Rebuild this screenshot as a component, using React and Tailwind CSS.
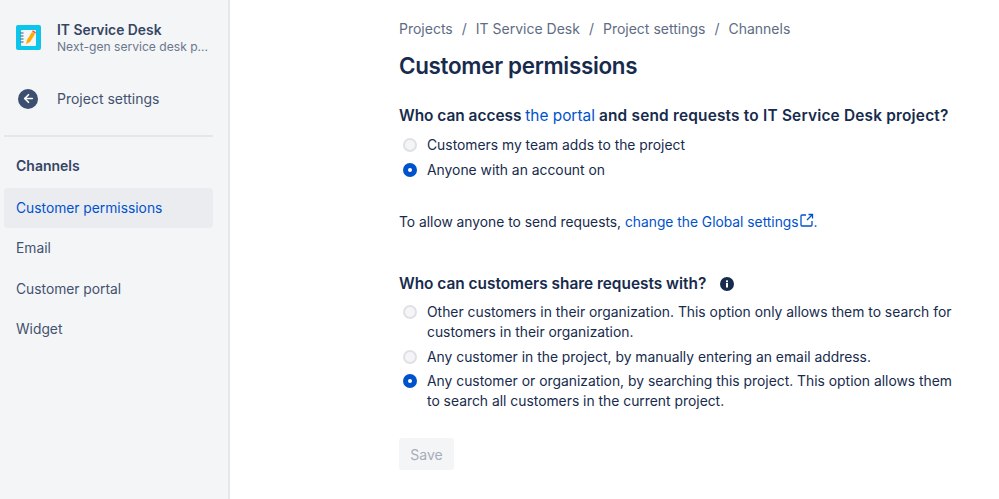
import { ArrowLeft } from "lucide-react";

const navItem = "flex h-10 items-center rounded-[4px] pl-3 text-[13.8px]";

const ProjectLogo = () => (
  <svg width="25" height="25" viewBox="0 0 25 25" className="shrink-0">
    <rect width="25" height="25" rx="2" fill="#0dc5ea" />
    <rect x="5" y="5" width="15" height="16" rx="1" fill="#f4f5f7" />
    <path d="M4.5 8h3M4.5 11h3M4.5 14h3M4.5 17h3" stroke="#42526e" strokeWidth="1" />
    <path d="M10 19l1-4 5-8 3 2-5 8z" fill="#ffab00" />
    <path d="M16 6.5l1-1.2 3 2-.8 1.4z" fill="#ff5630" />
  </svg>
);

const Radio = ({ checked }) =>
  checked ? (
    <span className="flex h-[14px] w-[14px] shrink-0 items-center justify-center rounded-full bg-[#0052cc]">
      <span className="h-1 w-1 rounded-full bg-white" />
    </span>
  ) : (
    <span className="h-[14px] w-[14px] shrink-0 rounded-full border-2 border-[#dfe1e6] bg-[#f4f5f7]" />
  );

const Option = ({ checked, children }) => (
  <div className="flex items-start gap-[10px] pl-[4px] text-[13.87px] leading-[20px] text-[#172b4d]">
    <span className="flex h-5 items-center">
      <Radio checked={checked} />
    </span>
    <span>{children}</span>
  </div>
);

const App = () => {
  return (
    <div className="flex h-[499px] w-[999px] overflow-hidden bg-white font-['Inter',sans-serif] antialiased">
      <aside className="h-full w-[230px] shrink-0 border-r-2 border-[#e4e6ea] bg-[#f4f5f7]">
        <div className="flex h-[74px] items-center gap-4 pl-4">
          <ProjectLogo />
          <div>
            <div className="text-[13.85px] leading-[18px] font-semibold text-[#344563]">IT Service Desk</div>
            <div className="text-[12.1px] leading-[15px] text-[#6b778c]">Next-gen service desk p...</div>
          </div>
        </div>
        <div className="flex h-[49px] items-center gap-[19px] pl-[18px]">
          <span className="flex h-5 w-5 items-center justify-center rounded-full bg-[#3d4f70] text-white">
            <ArrowLeft size={13} strokeWidth={3} />
          </span>
          <span className="text-[14px] text-[#42526e]">Project settings</span>
        </div>
        <div className="mx-1 mt-[12px] h-[2px] w-[209px] bg-[#e4e6ea]" />
        <div className="flex h-[51px] items-center pl-4 pt-[5px] text-[14px] font-semibold text-[#344563]">Channels</div>
        <nav className="ml-1 flex w-[209px] flex-col gap-[0.5px] text-[#42526e]">
          <div className={`${navItem} bg-[#ebecf0] text-[#0052cc]`}>Customer permissions</div>
          <div className={navItem}>Email</div>
          <div className={navItem}>Customer portal</div>
          <div className={navItem}>Widget</div>
        </nav>
      </aside>

      <main className="ml-[169px] w-[560px] pt-[20px]">
        <div className="flex gap-[9px] text-[14px] leading-[18px] text-[#5e6c84]">
          <span>Projects</span>
          <span>/</span>
          <span>IT Service Desk</span>
          <span>/</span>
          <span>Project settings</span>
          <span>/</span>
          <span>Channels</span>
        </div>
        <h1 className="mt-[13px] text-[22.4px] leading-[30px] font-semibold tracking-[-0.3px] text-[#172b4d]">Customer permissions</h1>

        <h2 className="mt-[24px] text-[15.4px] leading-[22px] font-semibold text-[#172b4d]">
          Who can access <span className="font-normal text-[#0052cc]">the portal</span>
          <span className="tracking-[0.2px]"> and send requests to IT Service Desk project?</span>
        </h2>
        <div className="mt-[8px] flex flex-col gap-[4.5px]">
          <Option>Customers my team adds to the project</Option>
          <Option checked>Anyone with an account on</Option>
        </div>

        <p className="mt-[32.5px] flex items-center text-[13.8px] leading-[20px] text-[#172b4d]">
          To allow anyone to send requests,&nbsp;
          <span className="text-[#0052cc]">change the Global settings</span>
          <svg width="14" height="14" viewBox="0 0 14 14" fill="none" stroke="#0052cc" strokeWidth="1.3" className="-mt-1 ml-[1px]">
            <path d="M6 2H2a1 1 0 0 0-1 1v9a1 1 0 0 0 1 1h9a1 1 0 0 0 1-1V8" />
            <path d="M8.5 1.5h4v4M12.5 1.5L7 7" />
          </svg>
          <span className="text-[#0052cc]">.</span>
        </p>

        <h2 className="mt-[41px] flex items-center gap-[14px] text-[15.4px] leading-[22px] font-semibold text-[#172b4d]">
          Who can customers share requests with?
          <svg width="14" height="14" viewBox="0 0 14 14">
            <circle cx="7" cy="7" r="7" fill="#172b4d" />
            <rect x="6" y="6" width="2" height="4.5" fill="#fff" />
            <rect x="6" y="3.4" width="2" height="1.8" fill="#fff" />
          </svg>
        </h2>
        <div className="mt-[7px] flex flex-col gap-[4.5px]">
          <Option>Other customers in their organization. This option only allows them to search for customers in their organization.</Option>
          <Option>Any customer in the project, by manually entering an email address.</Option>
          <Option checked>Any customer or organization, by searching this project. This option allows them to search all customers in the current project.</Option>
        </div>

        <button className="mt-[27px] h-[32px] w-[55px] rounded-[3px] bg-[#f4f5f7] text-[14px] text-[#a5adba]">Save</button>
      </main>
    </div>
  );
};

export default App;
